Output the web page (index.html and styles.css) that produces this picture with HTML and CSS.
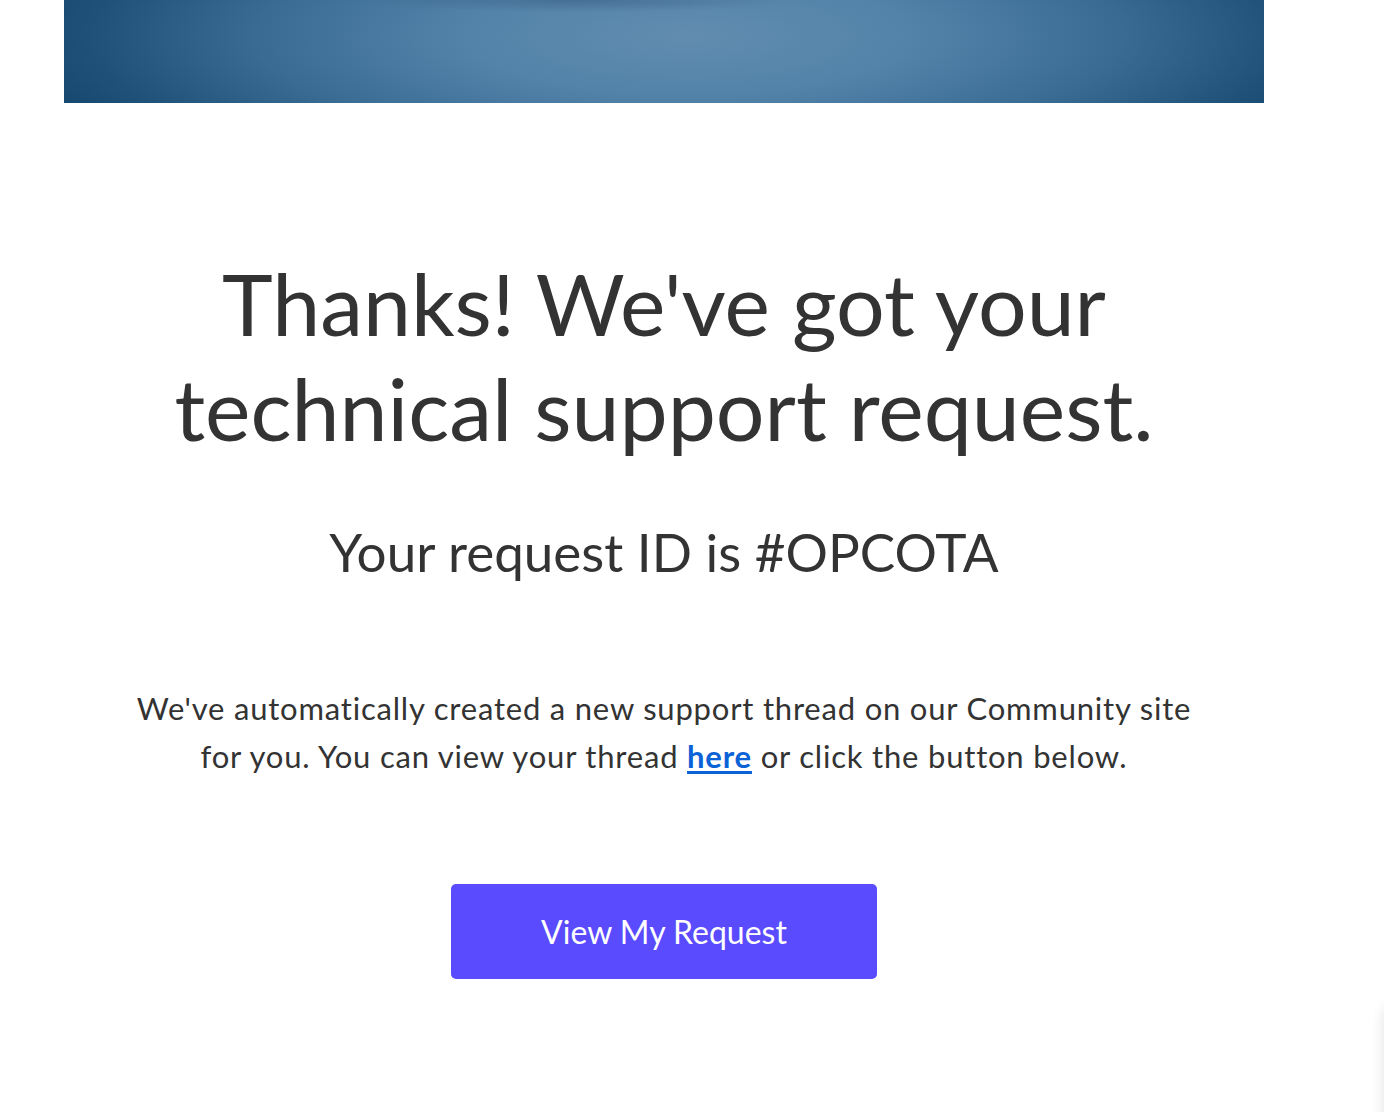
FILE: index.html
```html
<!DOCTYPE html>
<html lang="en">
<head>
  <meta charset="UTF-8" />
  <meta name="viewport" content="width=device-width, initial-scale=1.0"/>
  <title>Request received</title>
  <link rel="stylesheet" href="styles.css">
</head>
<body>

  <div class="banner"></div>

  <main class="content">
    <h1>Thanks! We've got your technical support request.</h1>
    <p class="request-id">Your request ID is #OPCOTA</p>
    <p class="note">
      We've automatically created a new support thread on our Community site
      for you. You can view your thread <a href="#">here</a> or click the button below.
    </p>
    <a class="btn" href="#">View My Request</a>
  </main>

  <div class="side-panel"></div>

</body>
</html>
```

FILE: styles.css
```css
body {
  margin: 0;
  background: #fff;
  color: #333;
  font-family: Lato, "Open Sans", sans-serif;
  overflow: hidden;
}

.banner {
  width: 1200px;
  height: 103px;
  margin-left: 64px;
  background:
    radial-gradient(ellipse 18% 12% at 43% 0%, rgba(40, 70, 110, 0.35), rgba(40, 70, 110, 0)),
    radial-gradient(ellipse 62% 190% at 52% 35%, #618cb0 0%, #5383a9 30%, #3a6b93 58%, #1f5179 80%, #0f4067 100%);
}

.content {
  width: 1200px;
  margin-left: 64px;
  text-align: center;
}

h1 {
  margin: 147px 0 0;
  padding: 0 80px;
  font-size: 86px;
  line-height: 105px;
  font-weight: 400;
}

.request-id {
  margin: 60px 0 0;
  font-size: 53px;
  line-height: 64px;
}

.note {
  margin: 100px auto 0;
  width: 1080px;
  font-size: 31px;
  line-height: 48px;
  letter-spacing: 0.8px;
}

.note a {
  color: #0b62d6;
  font-weight: 700;
  text-decoration: underline;
  text-underline-offset: 3px;
}

.btn {
  display: block;
  width: 426px;
  height: 95px;
  margin: 104px auto 0;
  background: #5a4bff;
  color: #fff;
  border-radius: 5px;
  font-size: 32px;
  line-height: 95px;
  text-decoration: none;
}

.side-panel {
  position: fixed;
  right: -40px;
  bottom: -20px;
  width: 40px;
  height: 125px;
  background: #fff;
  box-shadow: 0 0 14px rgba(0, 0, 0, 0.12);
  border-radius: 8px 0 0 0;
}
```
